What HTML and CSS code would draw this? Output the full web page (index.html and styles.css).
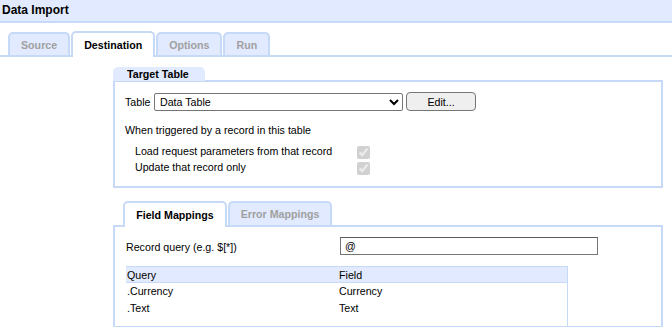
FILE: index.html
```html
<!DOCTYPE html>
<html>
<head>
<meta charset="utf-8">
<link rel="stylesheet" href="styles.css">
</head>
<body>
<div class="header">Data Import</div>
<div class="tabbar">
  <div class="tab">Source</div>
  <div class="tab active">Destination</div>
  <div class="tab">Options</div>
  <div class="tab">Run</div>
</div>
<div class="content">
  <div class="legend">Target Table</div>
  <div class="panel panel-target">
    <div class="table-row">
      <span class="table-label">Table</span>
      <select class="table-select"><option>Data Table</option></select>
      <button class="edit-btn">Edit...</button>
    </div>
    <div class="trigger">When triggered by a record in this table</div>
    <div class="checks">
      <label class="check-row"><span class="check-label">Load request parameters from that record</span><input type="checkbox" checked disabled></label>
      <label class="check-row"><span class="check-label">Update that record only</span><input type="checkbox" checked disabled></label>
    </div>
  </div>

  <div class="subtabbar">
    <div class="tab subtab active">Field Mappings</div>
    <div class="tab subtab">Error Mappings</div>
  </div>
  <div class="panel panel-map">
    <div class="query-row">
      <span class="query-label">Record query (e.g. $[*])</span>
      <input class="query-input" type="text" value="@">
    </div>
    <div class="grid">
      <div class="grid-head">
        <div class="col-q">Query</div>
        <div class="col-f">Field</div>
      </div>
      <div class="grid-row">
        <div class="col-q">.Currency</div>
        <div class="col-f">Currency</div>
      </div>
      <div class="grid-row">
        <div class="col-q">.Text</div>
        <div class="col-f">Text</div>
      </div>
      <div class="grid-fill"></div>
    </div>
  </div>
</div>
</body>
</html>
```

FILE: styles.css
```css
html, body {
  margin: 0;
  padding: 0;
  background: #ffffff;
  font-family: "Liberation Sans", Arial, sans-serif;
  font-size: 10.67px;
  color: #000000;
  overflow: hidden;
}

body {
  height: 327px;
}

.header {
  height: 21px;
  line-height: 21px;
  padding-left: 2px;
  background: #e1eafe;
  border-bottom: 2px solid #c6d9f7;
  font-size: 12px;
  font-weight: bold;
}

.tabbar {
  display: flex;
  align-items: flex-end;
  gap: 1px;
  padding: 8px 0 0 8px;
  height: 24px;
  border-bottom: 2px solid #c6d9f7;
}

.tab {
  box-sizing: border-box;
  height: 23px;
  line-height: 22px;
  padding: 0 11px;
  border: 2px solid #c6d9f7;
  border-bottom: 0;
  border-radius: 5px 5px 0 0;
  background: #e1eafe;
  color: #a0a0a0;
  font-weight: bold;
}

.tab.active {
  height: 26px;
  margin-bottom: -2px;
  line-height: 24px;
  background: #ffffff;
  color: #000000;
}

.content {
  margin: 10px 9px 0 113px;
}

.legend {
  display: inline-block;
  height: 14px;
  line-height: 14px;
  padding: 0 16px 0 14px;
  background: #e1eafe;
  border-radius: 5px 5px 0 0;
  font-weight: bold;
  vertical-align: top;
}

.panel {
  border: 2px solid #c6d9f7;
}

.panel-target {
  margin-top: -1px;
  padding: 10px 10px 0 10px;
  height: 94px;
}

.table-row {
  display: flex;
  align-items: center;
  height: 19px;
}

.table-label {
  width: 29px;
}

.table-select {
  box-sizing: border-box;
  width: 249px;
  height: 18px;
  margin: 0;
  padding: 0 0 0 1px;
  font-family: "Liberation Sans", Arial, sans-serif;
  font-size: 10.67px;
  color: #000;
  border: 1px solid #767676;
  border-radius: 2px;
  background: #fff;
}

.edit-btn {
  box-sizing: border-box;
  width: 70px;
  height: 19px;
  margin: 0 0 0 3px;
  padding: 0;
  font-family: "Liberation Sans", Arial, sans-serif;
  font-size: 10.67px;
  color: #000;
  background: #efefef;
  border: 1px solid #767676;
  border-radius: 4px;
}

.trigger {
  margin-top: 12px;
  height: 14px;
  line-height: 14px;
}

.checks {
  margin-top: 6px;
  padding-left: 10px;
}

.check-row {
  display: flex;
  align-items: center;
  height: 16px;
}

.check-label {
  width: 222px;
}

.check-row input {
  width: 13px;
  height: 13px;
  margin: 2px 0 0 0;
}

.subtabbar {
  display: flex;
  align-items: flex-end;
  gap: 1px;
  margin-top: 13px;
  padding-left: 10px;
  height: 24px;
  border-bottom: 2px solid #c6d9f7;
}

.subtab {
  width: 104px;
  height: 24px;
  padding: 0;
  text-align: center;
}

.subtab.active {
  height: 26px;
  line-height: 24px;
}

.subtab:not(.active) {
  line-height: 23px;
}

.panel-map {
  border-top: 0;
  padding: 10px 0 0 11px;
  height: 89px;
}

.query-row {
  display: flex;
  align-items: center;
  height: 18px;
}

.query-label {
  width: 214px;
  padding-top: 1px;
}

.query-input {
  box-sizing: border-box;
  width: 258px;
  height: 18px;
  margin: 0;
  padding: 0 4px;
  font-family: "Liberation Sans", Arial, sans-serif;
  font-size: 10.67px;
  color: #000;
  border: 1px solid #767676;
  border-top-color: #5a5a5a;
  border-radius: 0;
}

.grid {
  width: 442px;
  margin-top: 11px;
  box-sizing: border-box;
  border-right: 1px solid #c6d9f7;
}

.grid-head {
  display: flex;
  height: 15px;
  line-height: 16px;
  background: #e1eafe;
  border-top: 1px solid #c6d9f7;
  border-bottom: 1px solid #c6d9f7;
}

.grid-row {
  display: flex;
  height: 17px;
  line-height: 17px;
}

.col-q {
  width: 212px;
  padding-left: 1px;
}

.col-f {
  flex: 1;
}

.grid-fill {
  height: 30px;
}
```
